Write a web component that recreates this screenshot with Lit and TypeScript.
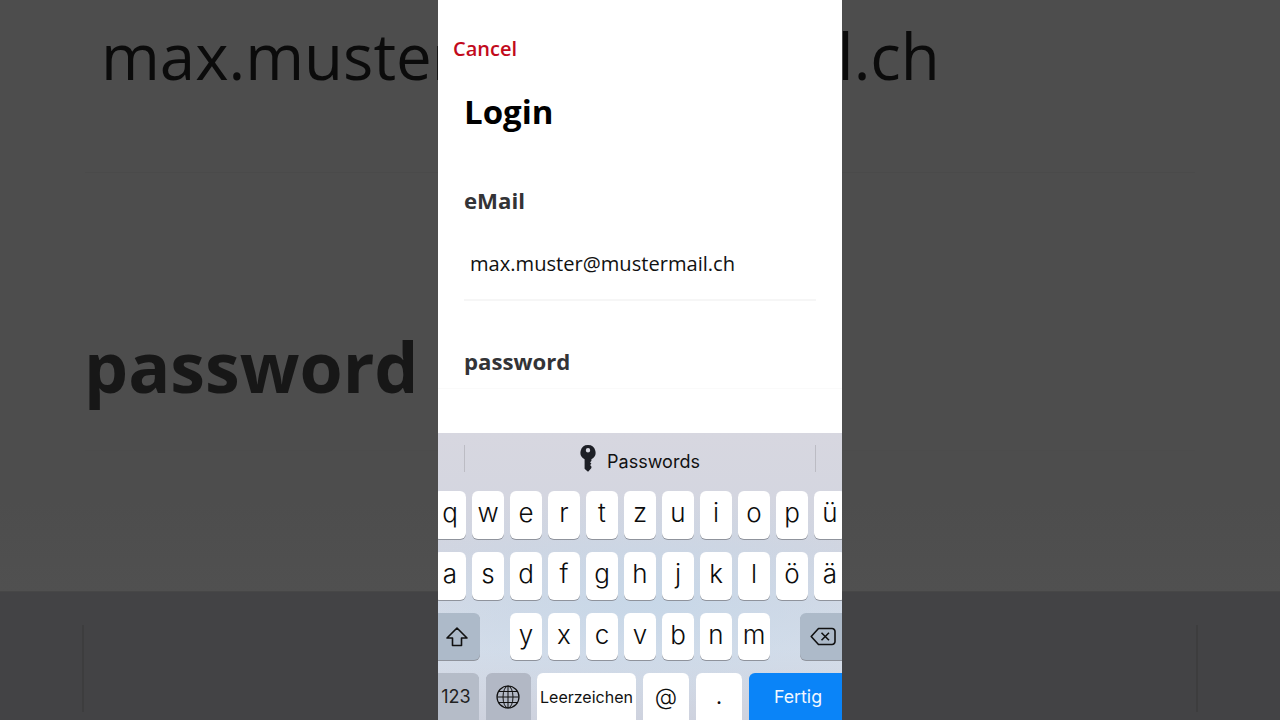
import { LitElement, html, css } from "lit";
import { customElement } from "lit/decorators.js";

const ROW1 = ["q", "w", "e", "r", "t", "z", "u", "i", "o", "p", "ü"];
const ROW2 = ["a", "s", "d", "f", "g", "h", "j", "k", "l", "ö", "ä"];
const ROW3 = ["y", "x", "c", "v", "b", "n", "m"];

@customElement("app-root")
export class AppRoot extends LitElement {
  static styles = css`
    :host {
      display: block;
      width: 1280px;
      height: 720px;
      overflow: hidden;
      position: relative;
      font-family: "Open Sans", "Liberation Sans", sans-serif;
    }
    .backdrop {
      position: absolute;
      inset: 0;
      display: flex;
      flex-direction: column;
      overflow: hidden;
      background: #4d4d4d;
    }
    .bd-top {
      height: 591px;
      flex: none;
      background: linear-gradient(#4d4d4d 85%, #505050);
      filter: blur(0.6px);
      overflow: hidden;
    }
    .bd-email {
      margin: 12px 0 0 101px;
      font-size: 63.6px;
      line-height: 88px;
      color: #0b0b0b;
      white-space: nowrap;
    }
    .bd-line {
      margin: 72px 85px 0 85px;
      height: 1px;
      background: #4a4a4a;
    }
    .bd-password {
      margin: 146px 0 0 84px;
      font-size: 69.8px;
      font-weight: 700;
      line-height: 94px;
      color: #171717;
      white-space: nowrap;
    }
    .bd-line2 {
      margin: 37px 85px 0 85px;
      height: 1px;
      background: #4c4c4c;
    }
    .bd-bottom {
      flex: 1;
      background: #434345;
      border-top: 1px solid #474747;
      display: flex;
      justify-content: space-between;
      padding: 33px 82px 8px 82px;
    }
    .bd-sep {
      width: 2px;
      background: #3d3d3e;
    }
    .stage {
      position: relative;
      display: flex;
      justify-content: center;
      height: 720px;
    }
    .phone {
      width: 404px;
      height: 720px;
      background: #fff;
      display: flex;
      flex-direction: column;
      overflow: hidden;
    }
    .form {
      flex: 1;
      min-height: 0;
      display: flex;
      flex-direction: column;
      align-items: flex-start;
    }
    .cancel {
      margin: 35px 0 0 15px;
      font-size: 20px;
      font-weight: 600;
      line-height: 28px;
      color: #c20a1c;
    }
    .title {
      margin: 27px 0 0 26px;
      font-size: 33px;
      font-weight: 700;
      line-height: 44px;
      color: #000;
    }
    .label {
      margin: 52px 0 0 26px;
      font-size: 22.2px;
      font-weight: 700;
      line-height: 30px;
      color: #333336;
    }
    .value {
      margin: 34px 0 0 32px;
      font-size: 20.1px;
      line-height: 28px;
      color: #111;
    }
    .rule {
      margin: 21px 0 0 26px;
      width: 352px;
      height: 2px;
      background: #f6f6f6;
    }
    .label.pw {
      margin-top: 46px;
    }
    .rule.faint {
      margin: 11px 0 0 0;
      width: 404px;
      height: 1px;
      background: #fafafa;
    }
    .keyboard {
      flex: none;
      height: 287px;
      font-family: Inter, "Liberation Sans", sans-serif;
      background:
        radial-gradient(ellipse 280px 110px at 52% 58%, rgba(198, 215, 232, 0.9) 0%, rgba(198, 215, 232, 0) 100%),
        linear-gradient(#d7d7e0 0%, #d2d5e0 40%, #d6deea 75%, #ced2de 100%);
      display: flex;
      flex-direction: column;
      overflow: hidden;
    }
    .suggest {
      height: 58px;
      flex: none;
      padding: 12px 26px 0;
      display: flex;
      justify-content: space-between;
      align-items: flex-start;
      box-sizing: border-box;
    }
    .suggest-sep {
      width: 1px;
      height: 27px;
      background: #bcbcc4;
    }
    .pw-item {
      display: flex;
      align-items: center;
      gap: 10px;
      height: 27px;
      color: #111;
      font-size: 18px;
    }
    .pw-text {
      margin-top: 6px;
      margin-left: 1px;
    }
    .key-icon {
      width: 16px;
      height: 27px;
      display: block;
    }
    .rows {
      display: flex;
      flex-direction: column;
      gap: 13px;
    }
    .row {
      display: flex;
      gap: 6px;
      height: 48px;
    }
    .row.letters {
      margin-left: -4px;
    }
    .row.third {
      gap: 30px;
      height: 47px;
    }
    .group {
      display: flex;
      gap: 6px;
    }
    .row.bottom {
      gap: 7px;
    }
    .key {
      flex: none;
      width: 32px;
      box-sizing: border-box;
      background: #fff;
      border-radius: 6px;
      box-shadow: 0 1px 0 #8f939c;
      display: flex;
      align-items: center;
      justify-content: center;
      font-size: 26px;
      font-weight: 300;
      color: #0c0c0c;
      padding-bottom: 5px;
    }
    .dark {
      background: #adbac9;
      padding: 0;
    }
    .shift {
      width: 42px;
      padding-right: 4px;
      border-radius: 0 6px 6px 0;
    }
    .del {
      width: 46px;
      padding-right: 10px;
      border-radius: 6px 0 0 6px;
      justify-content: flex-end;
    }
    .k123 {
      width: 41px;
      background: #b5bcc8;
      font-size: 18px;
      font-weight: 400;
      border-radius: 0 6px 6px 0;
      color: #222;
      padding-right: 5px;
    }
    .globe {
      width: 45px;
      background: #b2b8c5;
      margin-right: -1px;
      padding-right: 2px;
    }
    .space {
      width: 99px;
      font-size: 16px;
      font-weight: 400;
      color: #111;
    }
    .at {
      width: 46px;
      font-size: 23px;
      font-weight: 300;
    }
    .dot {
      width: 46px;
      font-size: 21px;
      font-weight: 400;
    }
    .done {
      width: 93px;
      background: #0a84f8;
      color: #f2f7ff;
      font-size: 17.8px;
      font-weight: 400;
      border-radius: 6px 0 0 6px;
      padding-left: 5px;
    }
    .tall {
      height: 60px;
      padding-bottom: 13px;
    }
    svg {
      display: block;
    }
  `;

  render() {
    return html`
      <div class="backdrop">
        <div class="bd-top">
          <div class="bd-email">max.muster@mustermail.ch</div>
          <div class="bd-line"></div>
          <div class="bd-password">password</div>
          <div class="bd-line2"></div>
        </div>
        <div class="bd-bottom">
          <div class="bd-sep"></div>
          <div class="bd-sep"></div>
        </div>
      </div>
      <div class="stage">
        <div class="phone">
          <div class="form">
            <div class="cancel">Cancel</div>
            <div class="title">Login</div>
            <div class="label">eMail</div>
            <div class="value">max.muster@mustermail.ch</div>
            <div class="rule"></div>
            <div class="label pw">password</div>
            <div class="rule faint"></div>
          </div>
          <div class="keyboard">
            <div class="suggest">
              <div class="suggest-sep"></div>
              <div class="pw-item">
                <svg class="key-icon" viewBox="0 0 16 27">
                  <path
                    fill="#1d1f26"
                    fill-rule="evenodd"
                    d="M8 0a7.5 7.5 0 0 1 3.4 14.2V16l-1.3 1.3 1.3 1.4-1.3 1.3 1.3 1.4v1.5L8.4 26.5h-.8L4.6 23.8V14.2A7.5 7.5 0 0 1 8 0Zm0 3a2.2 2.2 0 1 0 0 4.4A2.2 2.2 0 0 0 8 3Z"
                  />
                </svg>
                <span class="pw-text">Passwords</span>
              </div>
              <div class="suggest-sep"></div>
            </div>
            <div class="rows">
              <div class="row letters">${ROW1.map((k) => html`<div class="key">${k}</div>`)}</div>
              <div class="row letters">${ROW2.map((k) => html`<div class="key">${k}</div>`)}</div>
              <div class="row third">
                <div class="key dark shift">
                  <svg width="24" height="22" viewBox="0 0 24 22">
                    <path
                      d="M12 2 2 12h5.5v7.5h9V12H22L12 2Z"
                      fill="none"
                      stroke="#111"
                      stroke-width="1.6"
                      stroke-linejoin="round"
                    />
                  </svg>
                </div>
                <div class="group">${ROW3.map((k) => html`<div class="key">${k}</div>`)}</div>
                <div class="key dark del">
                  <svg width="26" height="19" viewBox="0 0 26 19">
                    <path
                      d="M8.5 1.5H22a3 3 0 0 1 3 3v10a3 3 0 0 1-3 3H8.5L1.2 9.5 8.5 1.5Z"
                      fill="none"
                      stroke="#111"
                      stroke-width="1.6"
                      stroke-linejoin="round"
                    />
                    <path d="M11.5 5.8 19 13.2M19 5.8l-7.5 7.4" stroke="#111" stroke-width="1.6" fill="none" />
                  </svg>
                </div>
              </div>
              <div class="row bottom">
                <div class="key k123 tall">123</div>
                <div class="key globe tall">
                  <svg width="24" height="24" viewBox="0 0 24 24" fill="none" stroke="#111" stroke-width="1">
                    <circle cx="12" cy="12" r="11" stroke-width="1.2" />
                    <ellipse cx="12" cy="12" rx="5" ry="11" />
                    <path d="M12 1v22M1 12h22M2.6 6.5h18.8M2.6 17.5h18.8" />
                  </svg>
                </div>
                <div class="key space tall">Leerzeichen</div>
                <div class="key at tall">@</div>
                <div class="key dot tall">.</div>
                <div class="key done tall">Fertig</div>
              </div>
            </div>
          </div>
        </div>
      </div>
    `;
  }
}
